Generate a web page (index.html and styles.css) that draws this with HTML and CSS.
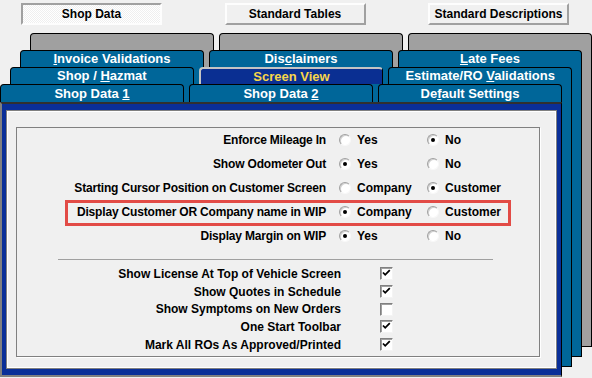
FILE: index.html
```html
<!DOCTYPE html>
<html>
<head>
<meta charset="utf-8">
<link rel="stylesheet" href="styles.css">
</head>
<body>
<div class="toolbar">
  <div class="btn pressed">Shop Data</div>
  <div class="btn">Standard Tables</div>
  <div class="btn">Standard Descriptions</div>
</div>
<div class="stack">
  <div class="card c3">
    <div class="tabs"><div class="tab"></div><div class="tab"></div><div class="tab"></div></div>
    <div class="card-body"></div>
  </div>
  <div class="card c2">
    <div class="tabs">
      <div class="tab"><u>I</u>nvoice Validations</div>
      <div class="tab">Dis<u>c</u>laimers</div>
      <div class="tab"><u>L</u>ate Fees</div>
    </div>
    <div class="card-body"></div>
  </div>
  <div class="card c1">
    <div class="tabs">
      <div class="tab">Shop / <u>H</u>azmat</div>
      <div class="tab selected">Screen View</div>
      <div class="tab">Estimate/RO <u>V</u>alidations</div>
    </div>
    <div class="card-body"></div>
  </div>
  <div class="card c0">
    <div class="tabs">
      <div class="tab">Shop Data <u>1</u></div>
      <div class="tab">Shop Data <u>2</u></div>
      <div class="tab">De<u>f</u>ault Settings</div>
    </div>
    <div class="panel">
      <div class="frame">
        <div class="group">
          <div class="opts">
            <div class="lbl">Enforce Mileage In</div>
            <div class="opt"><span class="radio"></span>Yes</div>
            <div class="opt"><span class="radio on"></span>No</div>

            <div class="lbl">Show Odometer Out</div>
            <div class="opt"><span class="radio on"></span>Yes</div>
            <div class="opt"><span class="radio"></span>No</div>

            <div class="lbl">Starting Cursor Position on Customer Screen</div>
            <div class="opt"><span class="radio"></span>Company</div>
            <div class="opt"><span class="radio on"></span>Customer</div>

            <div class="lbl">Display Customer OR Company name in WIP</div>
            <div class="opt"><span class="radio on"></span>Company</div>
            <div class="opt"><span class="radio"></span>Customer</div>

            <div class="lbl">Display Margin on WIP</div>
            <div class="opt"><span class="radio on"></span>Yes</div>
            <div class="opt"><span class="radio"></span>No</div>
          </div>
          <div class="sep"></div>
          <div class="checks">
            <div class="lbl">Show License At Top of Vehicle Screen</div>
            <div class="cb"><svg viewBox="0 0 13 13" width="13" height="13"><path d="M3 5.5 L5.2 7.8 L9.8 3.2" /></svg></div>
            <div class="lbl">Show Quotes in Schedule</div>
            <div class="cb"><svg viewBox="0 0 13 13" width="13" height="13"><path d="M3 5.5 L5.2 7.8 L9.8 3.2" /></svg></div>
            <div class="lbl">Show Symptoms on New Orders</div>
            <div class="cb"></div>
            <div class="lbl">One Start Toolbar</div>
            <div class="cb"><svg viewBox="0 0 13 13" width="13" height="13"><path d="M3 5.5 L5.2 7.8 L9.8 3.2" /></svg></div>
            <div class="lbl">Mark All ROs As Approved/Printed</div>
            <div class="cb"><svg viewBox="0 0 13 13" width="13" height="13"><path d="M3 5.5 L5.2 7.8 L9.8 3.2" /></svg></div>
          </div>
          <div class="highlight"></div>
        </div>
      </div>
    </div>
  </div>
</div>
</body>
</html>
```
FILE: styles.css
```css
* { box-sizing: border-box; }
body {
  margin: 0;
  width: 592px;
  height: 378px;
  overflow: hidden;
  background: #f0f0f0;
  font-family: "Liberation Sans", Arial, sans-serif;
  color: #000;
}
.toolbar {
  display: flex;
  gap: 62.5px;
  padding: 3px 0 0 21px;
  height: 25px;
}
.btn {
  width: 141px;
  height: 22px;
  font-size: 12px;
  font-weight: bold;
  line-height: 18px;
  text-align: center;
  background: #f0f0f0;
  border: 2px solid;
  border-color: #fdfdfd #a0a0a0 #a0a0a0 #fdfdfd;
}
.btn.pressed {
  border-color: #a0a0a0 #fdfdfd #fdfdfd #a0a0a0;
  background-color: #f6f6f6;
  background-image: repeating-conic-gradient(#ffffff 0 25%, #efefef 0 50%);
  background-size: 2px 2px;
}
.stack {
  display: grid;
  margin-top: 8px;
  width: 592px;
}
.card {
  grid-area: 1 / 1;
  display: flex;
  flex-direction: column;
}
.c3 { margin: 0 0 30px 30px; }
.c2 { margin: 17px 10px 20px 20px; }
.c1 { margin: 34px 20px 10px 10px; }
.c0 { margin: 51px 30px 0 0; }
.tabs {
  display: flex;
  gap: 5px;
  height: 17px;
  flex: none;
}
.c0 .tabs { height: 18px; }
.tab {
  flex: 1;
  border: 1px solid #000;
  border-bottom: 0;
  border-radius: 4px 4px 0 0;
  background: #006699;
  color: #fff;
  font-size: 13px;
  font-weight: bold;
  text-align: center;
  line-height: 16px;
  white-space: nowrap;
}
.c0 .tab { line-height: 17px; }
.c3 .tab { background: #a0a0a0; }
.tab.selected {
  background: #0a2f92;
  color: #f7d64a;
  border-width: 2px 1px 0 2px;
  border-color: #c4c4c4 #000 transparent #c4c4c4;
  line-height: 15px;
}
.card-body {
  flex: 1;
  background: #006699;
  border: 1px solid #000;
  border-top: 0;
}
.c3 .card-body { background: #a0a0a0; }
.panel {
  background: #0a2f98;
  border-style: solid;
  border-width: 2px 1px 2px 2px;
  border-color: #303030 #000 #808080 #808080;
  padding: 6px 4px 6px 4px;
}
.frame {
  background: #f0f0f0;
  border: 1px solid #808080;
  box-shadow: inset 0 0 0 1px #ffffff;
  padding: 16px 16px 11px 9px;
}
.group {
  position: relative;
  height: 230px;
  border: 1px solid #808080;
  box-shadow: 1px 1px 0 #ffffff;
  font-size: 12px;
  font-weight: bold;
}
.opts {
  display: grid;
  grid-template-columns: 322px 88px 1fr;
  grid-auto-rows: 24px;
  align-items: center;
}
.lbl {
  text-align: right;
  white-space: nowrap;
}
.opts .lbl {
  padding-right: 13px;
  letter-spacing: -0.18px;
}
.opt {
  display: flex;
  align-items: center;
  gap: 6px;
}
.radio {
  position: relative;
  width: 12px;
  height: 12px;
  border-radius: 50%;
  background: #fff;
  border: 1px solid;
  border-color: #a0a0a0 #f8f8f8 #f8f8f8 #a0a0a0;
  box-shadow: inset 1px 1px 0 #d0d0d0;
  flex: none;
}
.radio.on::after {
  content: "";
  position: absolute;
  left: 3px;
  top: 3px;
  width: 4px;
  height: 4px;
  border-radius: 50%;
  background: #000;
}
.sep {
  margin: 11px 0 5px 41px;
  width: 435px;
  height: 1px;
  background: #a0a0a0;
}
.checks {
  display: grid;
  grid-template-columns: 363px 1fr;
  grid-auto-rows: 17.7px;
  align-items: center;
}
.checks .lbl { padding-right: 39px; }
.cb {
  width: 13px;
  height: 13px;
  background: #fff;
  border: 1px solid;
  border-color: #808080 #f4f4f4 #f4f4f4 #808080;
  box-shadow: inset 1px 1px 0 #a0a0a0;
}
.cb svg {
  display: block;
  margin: -1px 0 0 -1px;
}
.cb path {
  fill: none;
  stroke: #000;
  stroke-width: 1.8;
}
.highlight {
  position: absolute;
  left: 48px;
  top: 72px;
  width: 446px;
  height: 26px;
  border: 3px solid #e24b46;
}
```
